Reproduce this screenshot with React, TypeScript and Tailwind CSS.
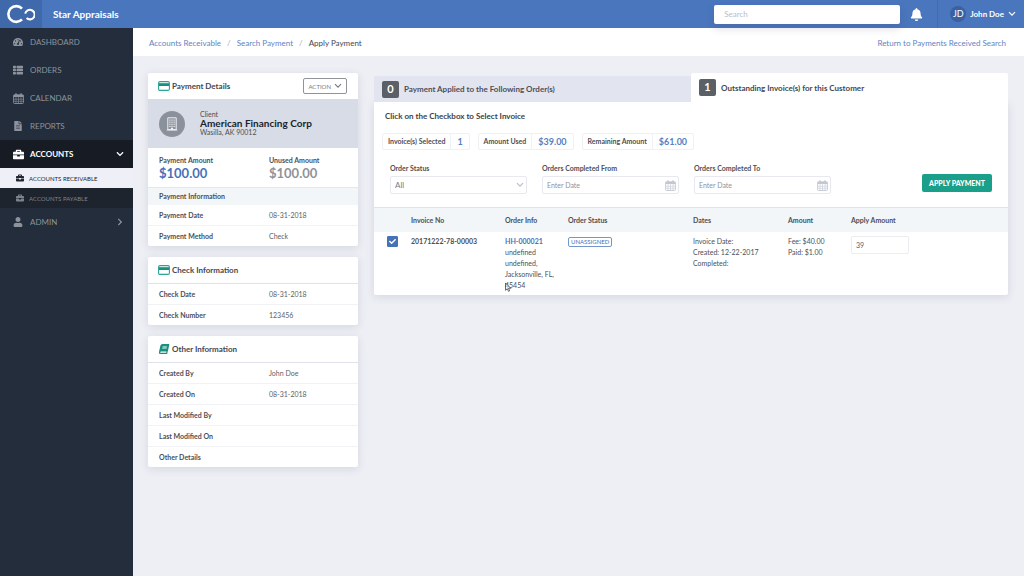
import React, { useState } from "react";
import {
  FaBell,
  FaBook,
  FaBriefcase,
  FaCheck,
  FaChevronDown,
  FaChevronRight,
  FaFileAlt,
  FaTachometerAlt,
  FaThList,
  FaUser,
} from "react-icons/fa";

const shadowClass = "shadow-[0_2px_8px_rgba(60,70,100,0.14)]";
const cardClass = "rounded-xs bg-white shadow-[0_2px_8px_rgba(60,70,100,0.14)]";

function Logo() {
  return (
    <svg viewBox="0 0 28 20" className="h-5 w-7" fill="none" stroke="#fff" aria-hidden="true">
      <path d="M15 4.6A7.9 7.9 0 1 0 15 15.4" strokeWidth="2.6" />
      <path d="M18.2 9.6A4.8 4.8 0 1 1 19.6 14.1" strokeWidth="2.1" />
    </svg>
  );
}

function CardIcon() {
  return (
    <svg viewBox="0 0 12 10" className="h-[10px] w-3" aria-hidden="true">
      <rect x="0.6" y="0.6" width="10.8" height="8.8" rx="1.4" fill="#fff" stroke="#2aa595" strokeWidth="1.1" />
      <rect x="1" y="2.2" width="10" height="2.8" fill="#17917f" />
    </svg>
  );
}

function BuildingIcon() {
  return (
    <svg viewBox="0 0 12 14" className="h-[14px] w-3" aria-hidden="true">
      <path d="M1.8 .8h8.4v11.9H1.8z" fill="none" stroke="#eef0f4" strokeWidth="1" />
      <path d="M.8 13h10.4" stroke="#eef0f4" strokeWidth="1" />
      <g fill="#eef0f4">
        {[2.5, 4.6, 6.7, 8.8].map((y) => (
          <g key={y}>
            <rect x="3.3" y={y} width="1.2" height="1.2" />
            <rect x="5.4" y={y} width="1.2" height="1.2" />
            <rect x="7.5" y={y} width="1.2" height="1.2" />
          </g>
        ))}
        <rect x="4.9" y="10.7" width="2.2" height="2.2" />
      </g>
    </svg>
  );
}

function CalendarIcon({ className }: { className: string }) {
  return (
    <svg viewBox="0 0 11 11" className={className} fill="none" stroke="currentColor" aria-hidden="true">
      <rect x="0.6" y="1.8" width="9.8" height="8.7" rx="0.8" strokeWidth="0.9" />
      <path d="M.6 2.9h9.8" strokeWidth="2.2" />
      <path d="M3 .3v2.2M8 .3v2.2" strokeWidth="1.3" />
      <path d="M3 4v6.5M5.5 4v6.5M8 4v6.5M.6 6.2h9.8M.6 8.3h9.8" strokeWidth="0.6" />
    </svg>
  );
}

function Chevron({ className }: { className: string }) {
  return (
    <svg viewBox="0 0 8 6" className={className} fill="none" stroke="currentColor" strokeWidth="1.2" aria-hidden="true">
      <path d="M1 1.2l3 3 3-3" />
    </svg>
  );
}

function NavItem({ icon, label, trailing }: { icon: React.ReactNode; label: string; trailing?: React.ReactNode }) {
  return (
    <a href="#" className="flex h-7 items-center gap-[6px] pr-[9px] pl-3 text-[8px] text-[#8d939c]">
      <span className="flex w-3 justify-center text-[10px]">{icon}</span>
      <span className="flex-1">{label}</span>
      {trailing}
    </a>
  );
}

function Sidebar() {
  return (
    <nav className="w-[133px] shrink-0 bg-[#232d3b]" aria-label="Main">
      <NavItem icon={<FaTachometerAlt />} label="DASHBOARD" />
      <NavItem icon={<FaThList />} label="ORDERS" />
      <NavItem icon={<CalendarIcon className="size-[11px]" />} label="CALENDAR" />
      <NavItem icon={<FaFileAlt />} label="REPORTS" />
      <a href="#" className="flex h-7 items-center gap-[6px] bg-[#171c24] pr-[9px] pl-3 text-[8px] font-bold text-white">
        <span className="flex w-3 justify-center text-[11px]"><FaBriefcase /></span>
        <span className="flex-1">ACCOUNTS</span>
        <FaChevronDown className="size-2" />
      </a>
      <a href="#" className="flex h-5 items-center gap-[5px] bg-[#eeeff7] px-4 text-[6px] text-[#20262f]">
        <FaBriefcase className="size-2" />
        ACCOUNTS RECEIVABLE
      </a>
      <a href="#" className="flex h-5 items-center gap-[5px] bg-[#1d242e] px-4 text-[6px] text-[#7d838c]">
        <FaBriefcase className="size-2" />
        ACCOUNTS PAYABLE
      </a>
      <NavItem icon={<FaUser />} label="ADMIN" trailing={<FaChevronRight className="size-2" />} />
    </nav>
  );
}

function TopBar() {
  return (
    <header className="flex h-7 shrink-0 items-center bg-[#4a76bd] text-white">
      <a href="#" aria-label="Home" className="flex h-7 w-[42px] items-center justify-center bg-[#4069ab]">
        <Logo />
      </a>
      <span className="flex-1 pl-[11px] text-[10px] font-bold">Star Appraisals</span>
      <input
        type="search"
        aria-label="Search"
        placeholder="Search"
        className="relative h-[19px] w-[186px] rounded-xs bg-white px-[10px] text-[8px] text-gray-700 shadow-[0_4px_8px_rgba(60,70,100,0.2)] outline-none placeholder:text-[#b9bdcb]"
      />
      <button type="button" aria-label="Notifications" className="flex h-7 w-[38px] items-center justify-center border-r border-[#426bb0] pr-1">
        <FaBell className="size-[13px]" />
      </button>
      <button type="button" className="flex h-7 items-center gap-1 pr-2 pl-3 text-[8px] font-bold">
        <span className="flex size-4 items-center justify-center rounded-full bg-[#3a62a3] text-[9px] font-normal">JD</span>
        John Doe
        <Chevron className="h-[6px] w-2" />
      </button>
    </header>
  );
}

function Row({ label, value }: { label: string; value?: string }) {
  return (
    <div className="flex h-[21px] items-center border-b border-[#f1f2f5] px-[11px] text-[7px] last:h-5 last:border-b-0">
      <dt className="w-[110px] font-bold text-[#4c4f57]">{label}</dt>
      <dd className="flex-1 text-[#5c5f66]">{value}</dd>
    </div>
  );
}

function CardHeader({ icon, title }: { icon: React.ReactNode; title: string }) {
  return (
    <div className="flex h-[27px] items-center border-b border-[#dfe2e8] px-[10px]">
      {icon}
      <h2 className="flex-1 pl-[2px] text-[8px] font-bold text-[#44474f]">{title}</h2>
    </div>
  );
}

function Details() {
  return (
    <aside className="flex w-[210px] shrink-0 flex-col gap-[11px]">
      <section className={cardClass}>
        <div className="flex h-[26px] items-center pr-[11px] pl-[10px]">
          <CardIcon />
          <h2 className="flex-1 pl-[2px] text-[8px] font-bold text-[#44474f]">Payment Details</h2>
          <button type="button" className="flex h-4 items-center gap-[3px] rounded-xs border border-[#8f939a] px-1 text-[6px] text-[#777b83]">
            ACTION
            <Chevron className="h-[6px] w-2" />
          </button>
        </div>
        <div className="flex h-[49px] items-center gap-[15px] bg-[#d8dce7] px-[11px]">
          <span className="flex size-[26px] items-center justify-center rounded-full bg-[#8b919b]"><BuildingIcon /></span>
          <div className="text-[7px] leading-[9px] text-[#4b4e55]">
            <p>Client</p>
            <p className="text-[10px] font-bold text-[#20232b]">American Financing Corp</p>
            <p>Wasilla, AK 90012</p>
          </div>
        </div>
        <div className="flex h-10 items-center border-b border-[#e4e7eb] px-[11px] text-[7px] font-bold text-[#4c4f57]">
          <div className="w-[110px]">
            <p className="leading-[10px]">Payment Amount</p>
            <p className="text-[13px] leading-4 text-[#4672b8]">$100.00</p>
          </div>
          <div>
            <p className="leading-[10px]">Unused Amount</p>
            <p className="text-[13px] leading-4 text-[#8f939a]">$100.00</p>
          </div>
        </div>
        <h3 className="flex h-[17px] items-center bg-[#f2f6f9] px-[11px] text-[7px] font-bold text-[#4c4f57]">Payment Information</h3>
        <dl>
          <Row label="Payment Date" value="08-31-2018" />
          <Row label="Payment Method" value="Check" />
        </dl>
      </section>
      <section className={cardClass}>
        <CardHeader icon={<CardIcon />} title="Check Information" />
        <dl>
          <Row label="Check Date" value="08-31-2018" />
          <Row label="Check Number" value="123456" />
        </dl>
      </section>
      <section className={cardClass}>
        <CardHeader icon={<FaBook className="h-[10px] w-3 -skew-x-12 text-[#17917f]" />} title="Other Information" />
        <dl>
          <Row label="Created By" value="John Doe" />
          <Row label="Created On" value="08-31-2018" />
          <Row label="Last Modified By" />
          <Row label="Last Modified On" />
          <Row label="Other Details" />
        </dl>
      </section>
    </aside>
  );
}

function Stat({ label, value }: { label: string; value: string }) {
  return (
    <div className="flex h-[17px] items-center rounded-xs border border-[#f0f1f4] font-bold">
      <span className="px-[5px] text-[7px] text-[#4c4f57]">{label}</span>
      <span className="flex h-full items-center border-l border-[#f0f1f4] px-[6px] text-[9px] text-[#5580c2]">{value}</span>
    </div>
  );
}

function DateField({ id, label }: { id: string; label: string }) {
  return (
    <div className="w-[137px]">
      <label htmlFor={id} className="block text-[7px] leading-[10px] font-bold text-[#4c4f57]">{label}</label>
      <div className="mt-[3px] flex h-[18px] items-center rounded-xs border border-[#e8e9ee] pr-[2px] pl-1">
        <input id={id} placeholder="Enter Date" className="min-w-0 flex-1 text-[7px] text-gray-600 outline-none placeholder:text-[#8f929a]" />
        <CalendarIcon className="size-[11px] text-[#c3c7d2]" />
      </div>
    </div>
  );
}

function Invoices() {
  const [selected, setSelected] = useState(true);
  const [amount, setAmount] = useState("39");
  return (
    <main className="min-w-0 flex-1">
      <div role="tablist" className="relative grid grid-cols-2 items-end">
        <button type="button" role="tab" aria-selected="false" className="flex h-[26px] items-center gap-[5px] bg-[#e2e5ef] px-2 text-[8px] font-bold text-[#4c4f57]">
          <span className="flex size-[17px] items-center justify-center rounded-xs bg-[#5b5f66] text-[11px] text-white">0</span>
          Payment Applied to the Following Order(s)
        </button>
        <button type="button" role="tab" aria-selected="true" className="flex h-[29px] items-center gap-[5px] rounded-t-xs bg-white px-2 text-[8px] font-bold text-[#44474f]">
          <span className="flex size-[17px] items-center justify-center rounded-xs bg-[#5b5f66] text-[11px] text-white">1</span>
          Outstanding Invoice(s) for this Customer
        </button>
      </div>
      <div className={`rounded-b-xs bg-white ${shadowClass}`}>
        <h2 className="px-[11px] pt-[8px] text-[8px] leading-3 font-bold text-[#3c3f47]">Click on the Checkbox to Select Invoice</h2>
        <div className="flex gap-2 px-2 pt-[11px]">
          <Stat label="Invoice(s) Selected" value="1" />
          <Stat label="Amount Used" value="$39.00" />
          <Stat label="Remaining Amount" value="$61.00" />
        </div>
        <form className="flex items-end gap-[15px] px-4 pt-[13px] pb-[13px]" onSubmit={(e) => e.preventDefault()}>
          <div className="w-[137px]">
            <label htmlFor="status" className="block text-[7px] leading-[10px] font-bold text-[#4c4f57]">Order Status</label>
            <div className="relative mt-[3px]">
              <select id="status" className="block h-[18px] w-full appearance-none rounded-xs border border-[#e8e9ee] bg-white px-1 text-[8px] text-[#777b83] outline-none">
                <option>All</option>
              </select>
              <Chevron className="pointer-events-none absolute top-[6px] right-[3px] h-[6px] w-2 text-[#b9bdcb]" />
            </div>
          </div>
          <DateField id="from" label="Orders Completed From" />
          <DateField id="to" label="Orders Completed To" />
          <button type="submit" className="mb-[2px] ml-auto h-[18px] rounded-xs bg-[#1a9f8b] px-[7px] text-[7px] font-black text-white">APPLY PAYMENT</button>
        </form>
        <table className="w-full table-fixed text-left text-[7px] text-[#4c4f57]">
          <colgroup>
            <col className="w-[37px]" />
            <col className="w-[94px]" />
            <col className="w-[63px]" />
            <col className="w-[125px]" />
            <col className="w-[95px]" />
            <col className="w-[63px]" />
            <col />
          </colgroup>
          <thead>
            <tr className="h-6 border-t border-[#dfe2e8] bg-[#f2f6f9]">
              <td />
              <th>Invoice No</th>
              <th>Order Info</th>
              <th>Order Status</th>
              <th>Dates</th>
              <th>Amount</th>
              <th>Apply Amount</th>
            </tr>
          </thead>
          <tbody>
            <tr className="align-top leading-[11px]">
              <td className="pt-1 pl-[13px]">
                <label className="relative block size-[11px]">
                  <input
                    type="checkbox"
                    aria-label="Select invoice 20171222-78-00003"
                    checked={selected}
                    onChange={(e) => setSelected(e.target.checked)}
                    className="block size-[11px] appearance-none rounded-[1px] border border-[#4672b8] checked:bg-[#4672b8]"
                  />
                  {selected && <FaCheck className="pointer-events-none absolute top-[2px] left-[2px] size-[7px] text-white" />}
                </label>
              </td>
              <td className="pt-1 font-bold">20171222-78-00003</td>
              <td className="relative pt-1 pb-1">
                <a href="#" className="font-bold text-[#4672b8]">HH-000021</a>
                <br />undefined
                <br />undefined,
                <br /><span className="whitespace-nowrap">Jacksonville, FL,</span>
                <br />45454
                <svg viewBox="0 0 8 12" className="pointer-events-none absolute bottom-[2px] left-0 h-[11px] w-[7px]" aria-hidden="true">
                  <path d="M.6.8v8.4l2-1.8 1.4 3 1.3-.6-1.3-2.9h2.7z" fill="#fff" fillOpacity="0.5" stroke="#3c3f47" strokeWidth="0.9" />
                </svg>
              </td>
              <td className="pt-1">
                <span className="inline-block rounded-xs border border-[#7396cf] px-[2px] text-[6px] leading-2 text-[#4672b8]">UNASSIGNED</span>
              </td>
              <td className="pt-1">
                Invoice Date:
                <br />Created: 12-22-2017
                <br />Completed:
              </td>
              <td className="pt-1">
                Fee: $40.00
                <br />Paid: $1.00
              </td>
              <td className="pt-1">
                <input
                  aria-label="Apply amount"
                  value={amount}
                  onChange={(e) => setAmount(e.target.value)}
                  className="h-[18px] w-[58px] rounded-xs border border-[#ecedf1] px-1 text-[7px] text-[#5c5f66] outline-none"
                />
              </td>
            </tr>
          </tbody>
        </table>
      </div>
    </main>
  );
}

export default function App() {
  return (
    <div className="flex min-h-screen flex-col bg-[#eeeff5] font-[Lato,sans-serif]">
      <TopBar />
      <div className="flex flex-1">
        <Sidebar />
        <div className="flex min-w-0 flex-1 flex-col">
          <div className="flex h-7 items-center justify-between bg-white pt-[2px] pr-[18px] pl-4 text-[8px] text-[#5f83c3]">
            <nav aria-label="Breadcrumb" className="flex gap-[6px]">
              <a href="#">Accounts Receivable</a>
              <span className="text-[#a5a9b2]">/</span>
              <a href="#">Search Payment</a>
              <span className="text-[#a5a9b2]">/</span>
              <span className="text-[#44474f]">Apply Payment</span>
            </nav>
            <a href="#">Return to Payments Received Search</a>
          </div>
          <div className="flex items-start gap-4 pt-[17px] pr-4 pb-4 pl-[15px]">
            <Details />
            <Invoices />
          </div>
        </div>
      </div>
    </div>
  );
}
